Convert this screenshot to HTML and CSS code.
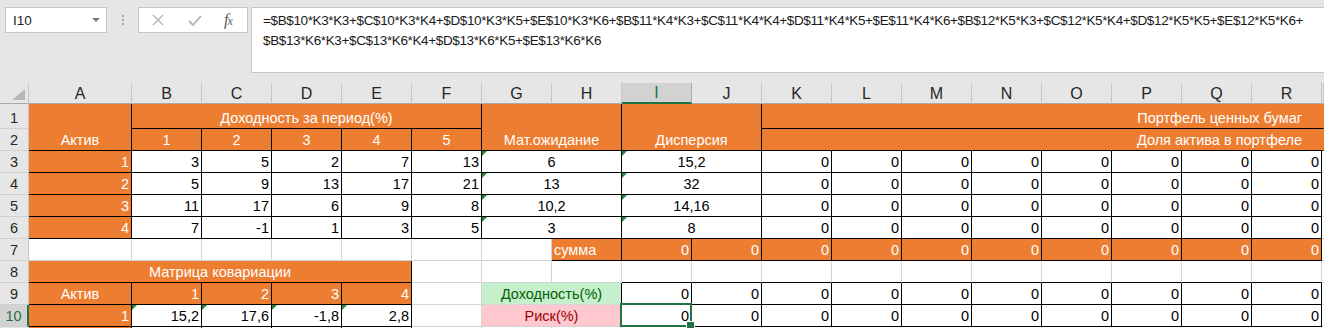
FILE: index.html
```html
<!DOCTYPE html>
<html lang="ru">
<head>
<meta charset="utf-8">
<title>Портфель</title>
<link rel="stylesheet" href="styles.css">
</head>
<body>
<div class="toolbar">
  <div class="namebox"><span>I10</span><span class="caret"></span></div>
  <div class="grip"><i></i><i></i><i></i></div>
  <div class="btns">
    <svg class="ic" width="12" height="12" viewBox="0 0 12 12"><path d="M1 1L11 11M11 1L1 11" stroke="#b3b3b3" stroke-width="1.4" fill="none"/></svg>
    <svg class="ic" width="14" height="11" viewBox="0 0 14 11"><path d="M1 6L5 10L13 1" stroke="#b3b3b3" stroke-width="1.8" fill="none"/></svg>
    <span class="fx">f<span>x</span></span>
  </div>
  <div class="formula">=$B$10*K3*K3+$C$10*K3*K4+$D$10*K3*K5+$E$10*K3*K6+$B$11*K4*K3+$C$11*K4*K4+$D$11*K4*K5+$E$11*K4*K6+$B$12*K5*K3+$C$12*K5*K4+$D$12*K5*K5+$E$12*K5*K6+<br>$B$13*K6*K3+$C$13*K6*K4+$D$13*K6*K5+$E$13*K6*K6</div>
</div>

<div class="sheet">
  <!-- column headers -->
  <div class="corner"><svg width="28" height="20" viewBox="0 0 28 20"><polygon points="25,6 25,17 12,17" fill="#b8b8b8"/></svg></div>
  <div class="ch">A</div><div class="ch">B</div><div class="ch">C</div><div class="ch">D</div><div class="ch">E</div><div class="ch">F</div><div class="ch">G</div><div class="ch">H</div><div class="ch csel">I</div><div class="ch">J</div><div class="ch">K</div><div class="ch">L</div><div class="ch">M</div><div class="ch">N</div><div class="ch">O</div><div class="ch">P</div><div class="ch">Q</div><div class="ch">R</div><div class="ch s"></div>

  <!-- row 1 -->
  <div class="rh">1</div>
  <div class="c o b m r2">Актив</div>
  <div class="c o b m s5">Доходность за период(%)</div>
  <div class="c o b m s2 r2">Мат.ожидание</div>
  <div class="c o b m s2 r2">Дисперсия</div>
  <div class="c o bB rt s9 pr">Портфель ценных бумаг</div>

  <!-- row 2 -->
  <div class="rh">2</div>
  <div class="c o b m">1</div><div class="c o b m">2</div><div class="c o b m">3</div><div class="c o b m">4</div><div class="c o b m">5</div>
  <div class="c o bB rt s9 pr">Доля актива в портфеле</div>

  <!-- row 3 -->
  <div class="rh">3</div>
  <div class="c o b rt">1</div>
  <div class="c b rt">3</div><div class="c b rt">5</div><div class="c b rt">2</div><div class="c b rt">7</div><div class="c b rt">13</div>
  <div class="c b m s2 t">6</div>
  <div class="c b m s2 t">15,2</div>
  <div class="c b rt">0</div><div class="c b rt">0</div><div class="c b rt">0</div><div class="c b rt">0</div><div class="c b rt">0</div><div class="c b rt">0</div><div class="c b rt">0</div><div class="c b rt">0</div>
  <div class="c s"></div>

  <!-- row 4 -->
  <div class="rh">4</div>
  <div class="c o b rt">2</div>
  <div class="c b rt">5</div><div class="c b rt">9</div><div class="c b rt">13</div><div class="c b rt">17</div><div class="c b rt">21</div>
  <div class="c b m s2 t">13</div>
  <div class="c b m s2 t">32</div>
  <div class="c b rt">0</div><div class="c b rt">0</div><div class="c b rt">0</div><div class="c b rt">0</div><div class="c b rt">0</div><div class="c b rt">0</div><div class="c b rt">0</div><div class="c b rt">0</div>
  <div class="c s"></div>

  <!-- row 5 -->
  <div class="rh">5</div>
  <div class="c o b rt">3</div>
  <div class="c b rt">11</div><div class="c b rt">17</div><div class="c b rt">6</div><div class="c b rt">9</div><div class="c b rt">8</div>
  <div class="c b m s2 t">10,2</div>
  <div class="c b m s2 t">14,16</div>
  <div class="c b rt">0</div><div class="c b rt">0</div><div class="c b rt">0</div><div class="c b rt">0</div><div class="c b rt">0</div><div class="c b rt">0</div><div class="c b rt">0</div><div class="c b rt">0</div>
  <div class="c s"></div>

  <!-- row 6 -->
  <div class="rh">6</div>
  <div class="c o b rt">4</div>
  <div class="c b rt">7</div><div class="c b rt">-1</div><div class="c b rt">1</div><div class="c b rt">3</div><div class="c b rt">5</div>
  <div class="c b m s2 t">3</div>
  <div class="c b m s2 t">8</div>
  <div class="c b rt">0</div><div class="c b rt">0</div><div class="c b rt">0</div><div class="c b rt">0</div><div class="c b rt">0</div><div class="c b rt">0</div><div class="c b rt">0</div><div class="c b rt">0</div>
  <div class="c s"></div>

  <!-- row 7 -->
  <div class="rh">7</div>
  <div class="c"></div><div class="c"></div><div class="c"></div><div class="c"></div><div class="c"></div><div class="c"></div><div class="c"></div>
  <div class="c o b lt">сумма</div>
  <div class="c o b rt">0</div><div class="c o b rt">0</div><div class="c o b rt">0</div><div class="c o b rt">0</div><div class="c o b rt">0</div><div class="c o b rt">0</div><div class="c o b rt">0</div><div class="c o b rt">0</div><div class="c o b rt">0</div><div class="c o b rt">0</div>
  <div class="c s"></div>

  <!-- row 8 -->
  <div class="rh">8</div>
  <div class="c o b m s5">Матрица ковариации</div>
  <div class="c"></div><div class="c"></div><div class="c"></div>
  <div class="c bB"></div><div class="c bB"></div><div class="c bB"></div><div class="c bB"></div><div class="c bB"></div><div class="c bB"></div><div class="c bB"></div><div class="c bB"></div><div class="c bB"></div><div class="c bB"></div>
  <div class="c s"></div>

  <!-- row 9 -->
  <div class="rh">9</div>
  <div class="c o b m">Актив</div>
  <div class="c o b rt">1</div><div class="c o b rt">2</div><div class="c o b rt">3</div><div class="c o b rt">4</div>
  <div class="c"></div>
  <div class="c g bR m s2">Доходность(%)</div>
  <div class="c b rt">0</div><div class="c b rt">0</div><div class="c b rt">0</div><div class="c b rt">0</div><div class="c b rt">0</div><div class="c b rt">0</div><div class="c b rt">0</div><div class="c b rt">0</div><div class="c b rt">0</div><div class="c b rt">0</div>
  <div class="c s"></div>

  <!-- row 10 -->
  <div class="rh rsel">10</div>
  <div class="c o b rt">1</div>
  <div class="c b rt t">15,2</div><div class="c b rt t">17,6</div><div class="c b rt t">-1,8</div><div class="c b rt t">2,8</div>
  <div class="c"></div>
  <div class="c p bR m s2">Риск(%)</div>
  <div class="c b rt sel">0</div><div class="c b rt">0</div><div class="c b rt">0</div><div class="c b rt">0</div><div class="c b rt">0</div><div class="c b rt">0</div><div class="c b rt">0</div><div class="c b rt">0</div><div class="c b rt">0</div><div class="c b rt">0</div>
  <div class="c s"></div>

  <!-- row 11 (only its top edge is visible) -->
  <div class="rh"></div>
  <div class="c o b"></div>
  <div class="c b"></div><div class="c b"></div><div class="c b"></div><div class="c b"></div>
  <div class="c"></div><div class="c"></div><div class="c"></div><div class="c"></div><div class="c"></div><div class="c"></div><div class="c"></div><div class="c"></div><div class="c"></div><div class="c"></div><div class="c"></div><div class="c"></div><div class="c"></div>
  <div class="c s"></div>
</div>
</body>
</html>
```

FILE: styles.css
```css
* { box-sizing: border-box; }
html, body { margin: 0; padding: 0; }
body {
  width: 1324px;
  height: 328px;
  overflow: hidden;
  background: #e6e6e6;
  font-family: "Liberation Sans", Arial, sans-serif;
  color: #000;
}

/* ---------- formula bar ---------- */
.toolbar {
  height: 83px;
  display: flex;
  align-items: flex-start;
  padding: 7px 0 0 5px;
}
.namebox {
  width: 102px;
  height: 26px;
  background: #fff;
  border: 1px solid #c6c6c6;
  display: flex;
  align-items: center;
  justify-content: space-between;
  padding: 0 6px 0 7px;
  font-size: 13.5px;
  color: #1f1f1f;
}
.caret {
  width: 0;
  height: 0;
  border-left: 4px solid transparent;
  border-right: 4px solid transparent;
  border-top: 4px solid #7a7a7a;
}
.grip {
  width: 31px;
  height: 26px;
  display: flex;
  flex-direction: column;
  align-items: center;
  justify-content: center;
  gap: 2px;
}
.grip i {
  display: block;
  width: 2px;
  height: 2px;
  background: #a8a8a8;
}
.btns {
  width: 110px;
  height: 26px;
  background: #fff;
  border: 1px solid #c6c6c6;
  display: flex;
  align-items: center;
  padding-left: 13px;
}
.btns .ic:first-child { margin-right: 24px; }
.btns .ic:nth-child(2) { margin-right: 22px; }
.fx {
  font-family: "Liberation Serif", serif;
  font-style: italic;
  font-size: 16px;
  color: #5a5a5a;
  letter-spacing: -1px;
}
.fx span { font-size: 12px; }
.formula {
  margin-left: 3px;
  flex: 1;
  height: 66px;
  background: #fff;
  border: 1px solid #c6c6c6;
  border-right: none;
  padding: 3px 0 0 11px;
  font-size: 13.5px;
  line-height: 20px;
  letter-spacing: -0.37px;
  white-space: nowrap;
  color: #1a1a1a;
}

/* ---------- sheet grid ---------- */
.sheet {
  display: grid;
  grid-template-columns: 29px 103px repeat(17, 70px) 2px;
  grid-template-rows: 21px 25px repeat(9, 22px) 1px;
  background: #fff;
}
.corner {
  background: #e6e6e6;
  border-right: 1px solid #c6c6c6;
  border-bottom: 1px solid #a9a9a9;
}
.corner svg { display: block; }
.ch {
  background: #e6e6e6;
  border-right: 1px solid #c6c6c6;
  border-bottom: 1px solid #a9a9a9;
  display: flex;
  align-items: flex-end;
  justify-content: center;
  font-size: 16px;
  line-height: 18px;
  color: #262626;
}
.ch.csel {
  background: #d2d2d2;
  color: #217346;
  border-bottom: 2px solid #217346;
  border-right-color: #ababab;
}
.rh {
  background: #e6e6e6;
  border-right: 1px solid #c6c6c6;
  border-bottom: 1px solid #d0d0d0;
  display: flex;
  align-items: flex-end;
  justify-content: center;
  padding-bottom: 2px;
  font-size: 14.5px;
  line-height: 16px;
  color: #262626;
}
.rh.rsel {
  background: #d2d2d2;
  color: #217346;
  border-right: 2px solid #217346;
}

.c {
  position: relative;
  background: #fff;
  border-right: 1px solid #d4d4d4;
  border-bottom: 1px solid #d4d4d4;
  display: flex;
  align-items: flex-end;
  padding: 0 2px 2px 2px;
  font-size: 14.5px;
  line-height: 16px;
  white-space: nowrap;
}
.c.s { border-right: none; }

.rt { justify-content: flex-end; }
.m { justify-content: center; }
.lt { justify-content: flex-start; }
.pr { padding-right: 21px; }

.s2 { grid-column: span 2; }
.s5 { grid-column: span 5; }
.s9 { grid-column: span 9; }
.r2 { grid-row: span 2; }

.o { background: #ed7d31; color: #fff; border-color: #ed7d31; }
.g { background: #c6efce; color: #006100; }
.p { background: #ffc7ce; color: #9c0006; }

.b { border-right-color: #000; border-bottom-color: #000; }
.bR { border-right-color: #000; }
.bB { border-bottom-color: #000; }

/* green error-indicator triangle */
.t::before {
  content: "";
  position: absolute;
  left: 0;
  top: 0;
  border-top: 5px solid #1f8a3a;
  border-right: 5px solid transparent;
}

/* active cell */
.sel { z-index: 2; }
.sel::after {
  content: "";
  position: absolute;
  left: -2px;
  top: -2px;
  right: -1px;
  bottom: -1px;
  border: 2px solid #217346;
}
.sel::before {
  content: "";
  position: absolute;
  right: -4px;
  bottom: -4px;
  width: 7px;
  height: 7px;
  background: #217346;
  border: 1px solid #fff;
  z-index: 3;
}
```
